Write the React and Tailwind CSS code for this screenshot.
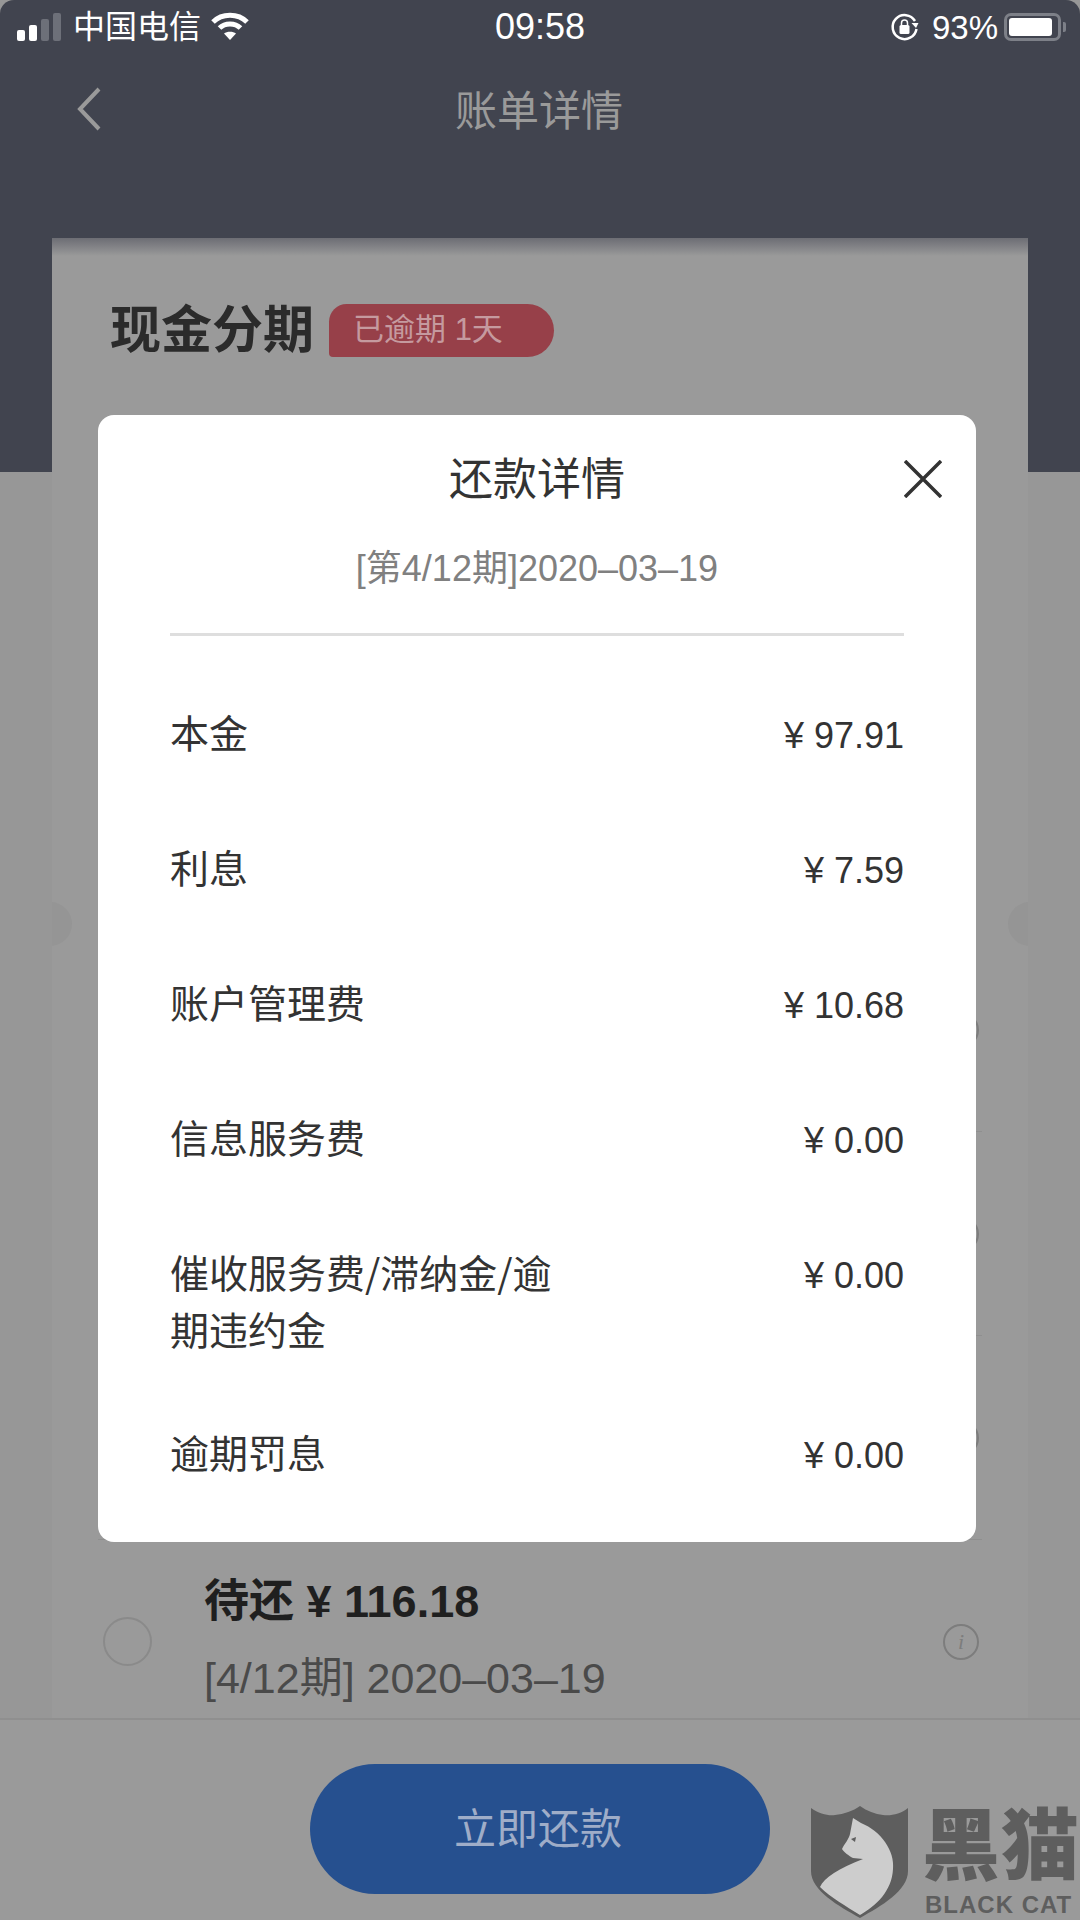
const fontStack = 'font-["Liberation_Sans","Noto_Sans_CJK_SC",sans-serif]';

const feeRows = [
  { label: '本金', amount: '¥ 97.91' },
  { label: '利息', amount: '¥ 7.59' },
  { label: '账户管理费', amount: '¥ 10.68' },
  { label: '信息服务费', amount: '¥ 0.00' },
  { label: '催收服务费/滞纳金/逾期违约金', amount: '¥ 0.00', tall: true },
  { label: '逾期罚息', amount: '¥ 0.00' },
];

function StatusBar() {
  return (
    <div className="relative flex h-[54px] items-center pl-[17px] pr-[14px] text-white">
      <div className="flex h-[28px] items-end gap-[4px]">
        <span className="h-[11px] w-[8px] rounded-[2px] bg-white" />
        <span className="h-[16px] w-[8px] rounded-[2px] bg-white" />
        <span className="h-[22px] w-[8px] rounded-[2px] bg-[#6d7079]" />
        <span className="h-[28px] w-[8px] rounded-[2px] bg-[#6d7079]" />
      </div>
      <span className="ml-[12px] text-[32px] leading-none">中国电信</span>
      <svg className="ml-[10px]" width="38" height="30" viewBox="0 0 38 30" fill="none" stroke="#fff" strokeWidth="5">
        <path d="M2 10 C11 1 27 1 36 10" />
        <path d="M8.500 16 C14 10.500 24 10.500 29.500 16" />
        <path d="M19 28 L13 21.500 C16 19 22 19 25 21.500 Z" fill="#fff" stroke="none" />
      </svg>
      <span className="absolute left-0 right-0 text-center text-[36px] leading-none">09:58</span>
      <div className="ml-auto flex items-center">
        <svg width="30" height="30" viewBox="0 0 30 30" fill="none">
          <path d="M25 9 A12 12 0 1 0 26.500 17" stroke="#fff" strokeWidth="2.500" />
          <path d="M21.500 11 L28.500 11 L26 16 Z" fill="#fff" />
          <rect x="9.500" y="13" width="10" height="9" rx="1.500" fill="#fff" />
          <path d="M11.500 13 V11 A3 3 0 0 1 17.500 11 V13" stroke="#fff" strokeWidth="1.500" />
        </svg>
        <span className="ml-[12px] text-[33px] leading-none">93%</span>
        <div className="ml-[6px] h-[28px] w-[57px] rounded-[7px] border-[3px] border-[#7d8088] p-[2px]">
          <div className="h-full w-[92%] rounded-[3px] bg-white" />
        </div>
        <div className="ml-[2px] h-[10px] w-[3px] rounded-r-[2px] bg-[#7d8088]" />
      </div>
    </div>
  );
}

function InfoIcon() {
  return (
    <div className="flex h-[36px] w-[36px] shrink-0 items-center justify-center rounded-full border-2 border-[#7d7d7d] font-['Liberation_Serif',serif] text-[22px] italic leading-none text-[#7d7d7d]">
      i
    </div>
  );
}

function BillRow({ children }) {
  return (
    <div className="mx-[46px] flex h-[204px] shrink-0 items-center border-b border-[#8f8f8f] pl-[5px] pr-[3px]">
      <span className="h-[49px] w-[49px] shrink-0 rounded-full border-2 border-[#8a8a8a]" />
      <div className="ml-[52px] flex-1">{children}</div>
      <InfoIcon />
    </div>
  );
}

function BillCard() {
  return (
    <section className="relative mx-[52px] -mt-[234px] h-[1480px] shrink-0 overflow-hidden bg-[#9a9a9a]">
      <div className="h-[18px] bg-gradient-to-b from-[#6c6d74] to-[#9a9a9a]" />
      <div className="flex h-[672px] items-start pl-[58px] pt-[48px]">
        <h2 className="text-[51px] font-bold leading-[54px] text-[#2b2b2b]">现金分期</h2>
        <span className="ml-[15px] flex h-[53px] w-[225px] items-center rounded-tl-[18px] rounded-tr-[27px] rounded-br-[27px] rounded-bl-[4px] bg-[#974049] pl-[24px] text-[31px] text-[#c59a9f]">
          已逾期 1天
        </span>
      </div>
      <span className="absolute -left-[24px] top-[664px] h-[44px] w-[44px] rounded-full bg-[#959595]" />
      <span className="absolute -right-[24px] top-[664px] h-[44px] w-[44px] rounded-full bg-[#959595]" />
      <BillRow />
      <BillRow />
      <BillRow />
      <BillRow>
        <p className="text-[45px] font-bold leading-[50px] text-[#1f1f1f]">待还 ¥ 116.18</p>
        <p className="mb-[6px] mt-[29px] text-[43px] leading-[44px] text-[#4a4a4a]">[4/12期] 2020–03–19</p>
      </BillRow>
    </section>
  );
}

function RepayModal() {
  return (
    <div className="absolute left-[98px] top-[415px] h-[1127px] w-[878px] rounded-[16px] bg-white px-[72px]">
      <h2 className="pt-[39px] text-center text-[44px] leading-[52px] text-[#333]">还款详情</h2>
      <svg className="absolute right-[34px] top-[45px]" width="38" height="38" viewBox="0 0 38 38" stroke="#333" strokeWidth="3.500">
        <path d="M1 1 L37 37 M37 1 L1 37" />
      </svg>
      <p className="mt-[41px] text-center text-[36px] leading-[44px] text-[#808080]">[第4/12期]2020–03–19</p>
      <div className="mt-[42px] h-[3px] bg-[#dedede]" />
      <div className="mt-[71px] flex flex-col">
        {feeRows.map((row) => (
          <div
            key={row.label}
            className={`flex items-start justify-between leading-[57px] text-[#333] ${row.tall ? 'h-[180px]' : 'h-[135px]'}`}
          >
            <span className="-mt-[4px] max-w-[410px] font-['Noto_Sans_CJK_SC',sans-serif] text-[39px]">{row.label}</span>
            <span className="text-[36px]">{row.amount}</span>
          </div>
        ))}
      </div>
    </div>
  );
}

function Watermark() {
  return (
    <div className="absolute left-[811px] top-[1806px] flex">
      <svg width="97" height="112" viewBox="0 0 97 112">
        <path
          d="M0 2 C8 8 18 10 24 9 C33 8 42 5 49 0 C56 5 64 8 72 9 C80 10 90 8 97 2 V65 C97 85 70 100 49 112 C28 100 0 85 0 65 Z"
          fill="#5e5e5e"
        />
        <path
          d="M42 12 L50 17 C70 25 84 45 82 63 C81 85 65 100 49 109 C35 100 20 92 9 81 C13 72 28 62 52 53 L42 52 C38 50 33 46 31 43 C34 37 38 33 39 28 Z"
          fill="#cdcdcd"
        />
        <path d="M40 33 L45 31 L44 36 Z" fill="#5e5e5e" />
      </svg>
      <div className="ml-[14px] flex w-[158px] flex-col font-bold text-[#5e5e5e]">
        <span className="mt-[1px] text-[78px] font-black leading-[80px] tracking-[1px]">黑猫</span>
        <span className="mt-[6px] whitespace-nowrap pl-[3px] text-[24px] leading-[24px] tracking-[1px]">BLACK CAT</span>
      </div>
    </div>
  );
}

function App() {
  return (
    <div className={`relative flex h-[1920px] w-[1080px] flex-col overflow-hidden bg-[#979797] ${fontStack}`}>
      <header className="h-[472px] shrink-0 rounded-t-[14px] bg-[#41444f]">
        <StatusBar />
        <div className="relative mt-[31px] flex h-[54px] items-center justify-center">
          <svg className="absolute left-[76px] top-[2px]" width="26" height="44" viewBox="0 0 26 44" fill="none" stroke="#9a9a9a" strokeWidth="4">
            <path d="M23 2 L4 22 L23 42" />
          </svg>
          <h1 className="pr-[2px] text-[42px] leading-none text-[#9a9a9a]">账单详情</h1>
        </div>
      </header>
      <BillCard />
      <footer className="flex flex-1 items-start justify-center border-t-2 border-[#8f8f8f] bg-[#9a9a9a] pt-[44px]">
        <button type="button" className="h-[130px] w-[460px] rounded-full bg-[#26508f] pr-[4px] text-[42px] text-[#9fadc8]">
          立即还款
        </button>
      </footer>
      <RepayModal />
      <Watermark />
    </div>
  );
}

export default App;
